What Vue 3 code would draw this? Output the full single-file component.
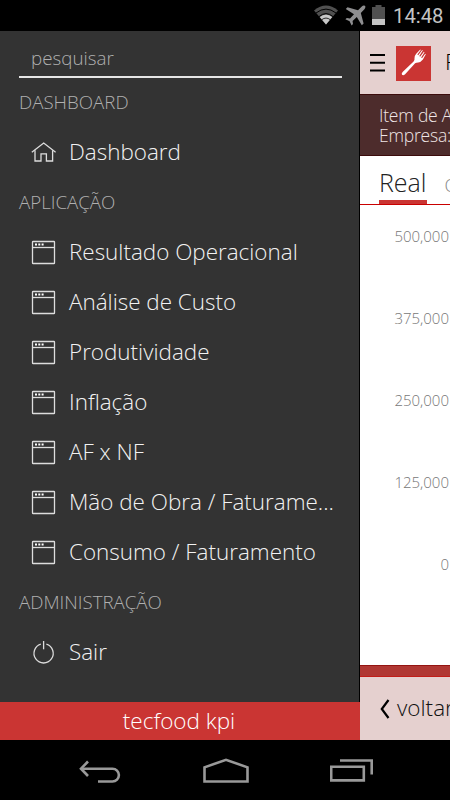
<template>
  <div class="phone">
    <div class="status">
      <svg class="wifi" width="24" height="20" viewBox="0 0 24 20">
        <path d="M0 5.5 Q12 -4.5 24 5.5 L12 19.5 Z" fill="#505050" />
        <path d="M5.7 12 Q12 6.8 18.3 12 L12 19.5 Z" fill="#c8c8c8" />
        <path d="M2 8 Q12 .2 22 8" fill="none" stroke="#000" stroke-width="1" />
        <path d="M5 11.6 Q12 5.6 19 11.6" fill="none" stroke="#000" stroke-width="1" />
        <path d="M7.6 14.8 Q12 11.3 16.4 14.8" fill="none" stroke="#000" stroke-width=".8" />
      </svg>
      <svg class="plane" width="21" height="21" viewBox="0 0 21 21">
        <path
          d="M20 .8 Q18.4 -.2 16.8 1.4 L13 5.2 L2.5 2.2 L.8 4 L9 9.3 L5 13.4 L1.8 12.9 L.4 14.3 L4.6 16.3 L6.6 20.5 L8 19.1 L7.6 16 L11.8 12 L16.8 20.3 L18.6 18.5 L15.8 8 L19.4 4.2 Q21 2.4 20 .8 Z"
          fill="#8e8e90"
        />
      </svg>
      <svg class="battery" width="13" height="20" viewBox="0 0 13 20">
        <path d="M3.5 0 H9.5 V2 H13 V20 H0 V2 H3.5 Z" fill="#505050" />
        <rect y="14" width="13" height="6" fill="#c4c4c4" />
      </svg>
      <span class="clock">14:48</span>
    </div>

    <div class="app">
      <aside class="drawer">
        <div class="search">pesquisar</div>
        <template v-for="group in groups" :key="group.title">
          <div class="group">{{ group.title }}</div>
          <div v-for="item in group.items" :key="item.label" class="item">
            <svg class="icon" width="26" height="26" viewBox="0 0 26 26" fill="none" stroke="#ddd" stroke-width="1.3">
              <template v-if="item.icon == 'home'">
                <path d="M1.8 13.2 L13.7 4 L25.6 13.2" />
                <path d="M5 11.2 V22 H11 V14.8 H16.4 V22 H22.6 V11.2" />
              </template>
              <template v-else-if="item.icon == 'window'">
                <rect x="2.5" y="2.5" width="22" height="22" rx=".6" />
                <path d="M3 8.5 H24" />
                <path d="M5 5.6 H13.6" stroke="#fff" stroke-width="2" stroke-dasharray="2 1.3" />
              </template>
              <template v-else>
                <path d="M10.8 5.2 A9.6 9.6 0 1 0 16.4 5.2" />
                <path d="M13.6 2 V10.3" />
              </template>
            </svg>
            <span class="label">{{ item.label }}</span>
          </div>
        </template>
        <div class="brand">tecfood kpi</div>
      </aside>

      <main class="page">
        <header class="top">
          <svg class="burger" width="15" height="18" viewBox="0 0 15 18">
            <path d="M0 1 H15 M0 8.8 H15 M0 16.5 H15" stroke="#000" stroke-width="2" />
          </svg>
          <svg class="logo" width="35" height="35" viewBox="0 0 35 35">
            <rect width="35" height="35" fill="#ca3533" />
            <path
              d="M6 28.8 Q5.2 27.6 6.6 26 L17.6 15.6 Q18.8 14.3 18.5 12.3 Q18.4 9.8 20.2 7.8 L24.2 3.4 L24.8 3.9 L21.4 8.6 L22.2 9.3 L26.2 4.1 L26.8 4.6 L23.3 10 L24.1 10.7 L27.9 5.8 L28.5 6.3 L25.2 11.6 L26 12.2 L29.2 7.8 L29.8 8.3 L26.9 13.6 Q25 16.2 22.2 16.4 Q20.3 16.4 19.1 17.3 L9.1 28.3 Q7.2 30 6 28.8 Z"
              fill="#fff"
            />
          </svg>
          <span class="title">R</span>
        </header>
        <div class="filter">
          <div>Item de A</div>
          <div>Empresa:</div>
        </div>
        <nav class="tabs">
          <span class="tab active">Real</span>
          <span class="tab small">O</span>
        </nav>
        <div class="chart">
          <div v-for="tick in ticks" :key="tick" class="tick">{{ tick }}</div>
        </div>
        <div class="strip"></div>
        <footer class="back">
          <svg width="10" height="20" viewBox="0 0 10 20">
            <path d="M8.5 1 L1.8 10 L8.5 19" fill="none" stroke="#000" stroke-width="2.2" />
          </svg>
          <span class="back-label">voltar</span>
        </footer>
      </main>
    </div>

    <div class="navbar">
      <svg width="42" height="24" viewBox="0 0 42 24">
        <path d="M19 22.5 H33.5 A6.4 6.4 0 0 0 33.5 9.7 H2" />
        <path d="M9 2.5 L2 9.7 L9 17" />
      </svg>
      <svg width="46" height="25" viewBox="0 0 46 25">
        <path d="M1.5 23.5 V9.3 L23 1.8 L44.5 9.3 V23.5 Z" />
      </svg>
      <svg width="43" height="23" viewBox="0 0 43 23">
        <path d="M1.2 7.8 H33.8 V21.4 H1.2 Z M10 1.5 H41.7 V15.5" />
      </svg>
    </div>
  </div>
</template>

<script setup>
const groups = [
  { title: "DASHBOARD", items: [{ label: "Dashboard", icon: "home" }] },
  {
    title: "APLICAÇÃO",
    items: [
      { label: "Resultado Operacional", icon: "window" },
      { label: "Análise de Custo", icon: "window" },
      { label: "Produtividade", icon: "window" },
      { label: "Inflação", icon: "window" },
      { label: "AF x NF", icon: "window" },
      { label: "Mão de Obra / Faturame...", icon: "window" },
      { label: "Consumo / Faturamento", icon: "window" },
    ],
  },
  { title: "ADMINISTRAÇÃO", items: [{ label: "Sair", icon: "power" }] },
];

const ticks = ["500,000", "375,000", "250,000", "125,000", "0"];
</script>

<style scoped>
.phone {
  width: 450px;
  height: 800px;
  overflow: hidden;
  display: flex;
  flex-direction: column;
  background: #000;
  font-family: "Open Sans", sans-serif;
  font-weight: 300;
  white-space: nowrap;
}

.phone svg {
  display: block;
  flex: none;
}

.status {
  height: 31px;
  flex: none;
  display: flex;
  justify-content: flex-end;
  align-items: flex-start;
  padding-right: 6px;
}

.wifi {
  margin: 5px 7px 0 0;
}

.plane {
  margin: 5px 6px 0 0;
}

.battery {
  margin: 5px 8px 0 0;
}

.clock {
  width: 51px;
  font-family: Roboto, sans-serif;
  font-weight: 400;
  font-size: 20.3px;
  line-height: 33px;
  color: #c4c4c4;
}

.app {
  height: 709px;
  flex: none;
  display: flex;
}

.drawer {
  width: 360px;
  box-sizing: border-box;
  flex: none;
  display: flex;
  flex-direction: column;
  background: #333;
  border-right: 1px solid #000;
}

.search {
  height: 45px;
  margin: 0 17px 0 19px;
  padding-left: 12px;
  border-bottom: 2px solid #e6e6e6;
  font-size: 18.8px;
  line-height: 54px;
  color: #b0b0b0;
}

.group {
  height: 50px;
  padding-left: 19px;
  font-size: 18.7px;
  line-height: 48px;
  color: #b0b0b0;
}

.item {
  height: 50px;
  display: flex;
  align-items: center;
  padding: 0 20px 0 30px;
}

.icon {
  margin: -2px 13px 0 0;
}

.label {
  font-size: 22.45px;
  line-height: 48px;
  height: 50px;
  color: #f2f2f2;
}

.brand {
  height: 38px;
  margin-top: auto;
  margin-right: -1px;
  padding-right: 2px;
  background: #ca3533;
  text-align: center;
  font-size: 22.5px;
  line-height: 37px;
  color: #fff;
}

.page {
  width: 90px;
  flex: none;
  overflow: hidden;
  display: flex;
  flex-direction: column;
  background: #fff;
}

.top {
  height: 63px;
  flex: none;
  display: flex;
  align-items: center;
  padding-left: 10px;
  background: #e5d0cf;
}

.logo {
  margin: 2px 14px 0 11px;
}

.title {
  font-size: 22.5px;
  line-height: 62px;
  height: 63px;
}

.filter {
  height: 62px;
  flex: none;
  box-sizing: border-box;
  padding: 10px 0 0 19px;
  border-top: 1px solid #3c0c0c;
  border-bottom: 1px solid #3c0c0c;
  background: #4d2c2c;
  color: #f0e6e6;
  font-size: 17.5px;
  letter-spacing: -0.2px;
  line-height: 20px;
}

.tabs {
  height: 49px;
  flex: none;
  box-sizing: border-box;
  display: flex;
  padding-left: 19px;
  border-bottom: 1px solid #c90000;
}

.tab {
  font-size: 25px;
  line-height: 53px;
  color: #222;
}

.active {
  height: 44px;
  border-bottom: 4px solid #ca3533;
}

.small {
  margin-left: 18px;
  font-size: 18px;
  line-height: 58px;
  color: #888;
}

.chart {
  height: 460px;
  flex: none;
  box-sizing: border-box;
  padding: 20px 1px 0 0;
}

.tick {
  height: 82px;
  line-height: 22px;
  font-size: 15px;
  text-align: right;
  color: #777;
}

.strip {
  height: 12px;
  flex: none;
  box-sizing: border-box;
  background: #b03733;
  border-top: 1px solid #941412;
  border-bottom: 1px solid #c21c18;
}

.back {
  height: 63px;
  flex: none;
  display: flex;
  align-items: center;
  gap: 7px;
  padding-left: 20px;
  background: #e5d0cf;
  font-size: 22.5px;
  color: #111;
}

.back-label {
  height: 63px;
  line-height: 62px;
}

.navbar {
  height: 60px;
  box-sizing: border-box;
  display: flex;
  justify-content: space-between;
  align-items: center;
  padding: 1px 77px 0 79px;
}

.navbar path {
  fill: none;
  stroke: #999;
  stroke-width: 2.6;
}
</style>

<style>
body {
  margin: 0;
}
</style>
